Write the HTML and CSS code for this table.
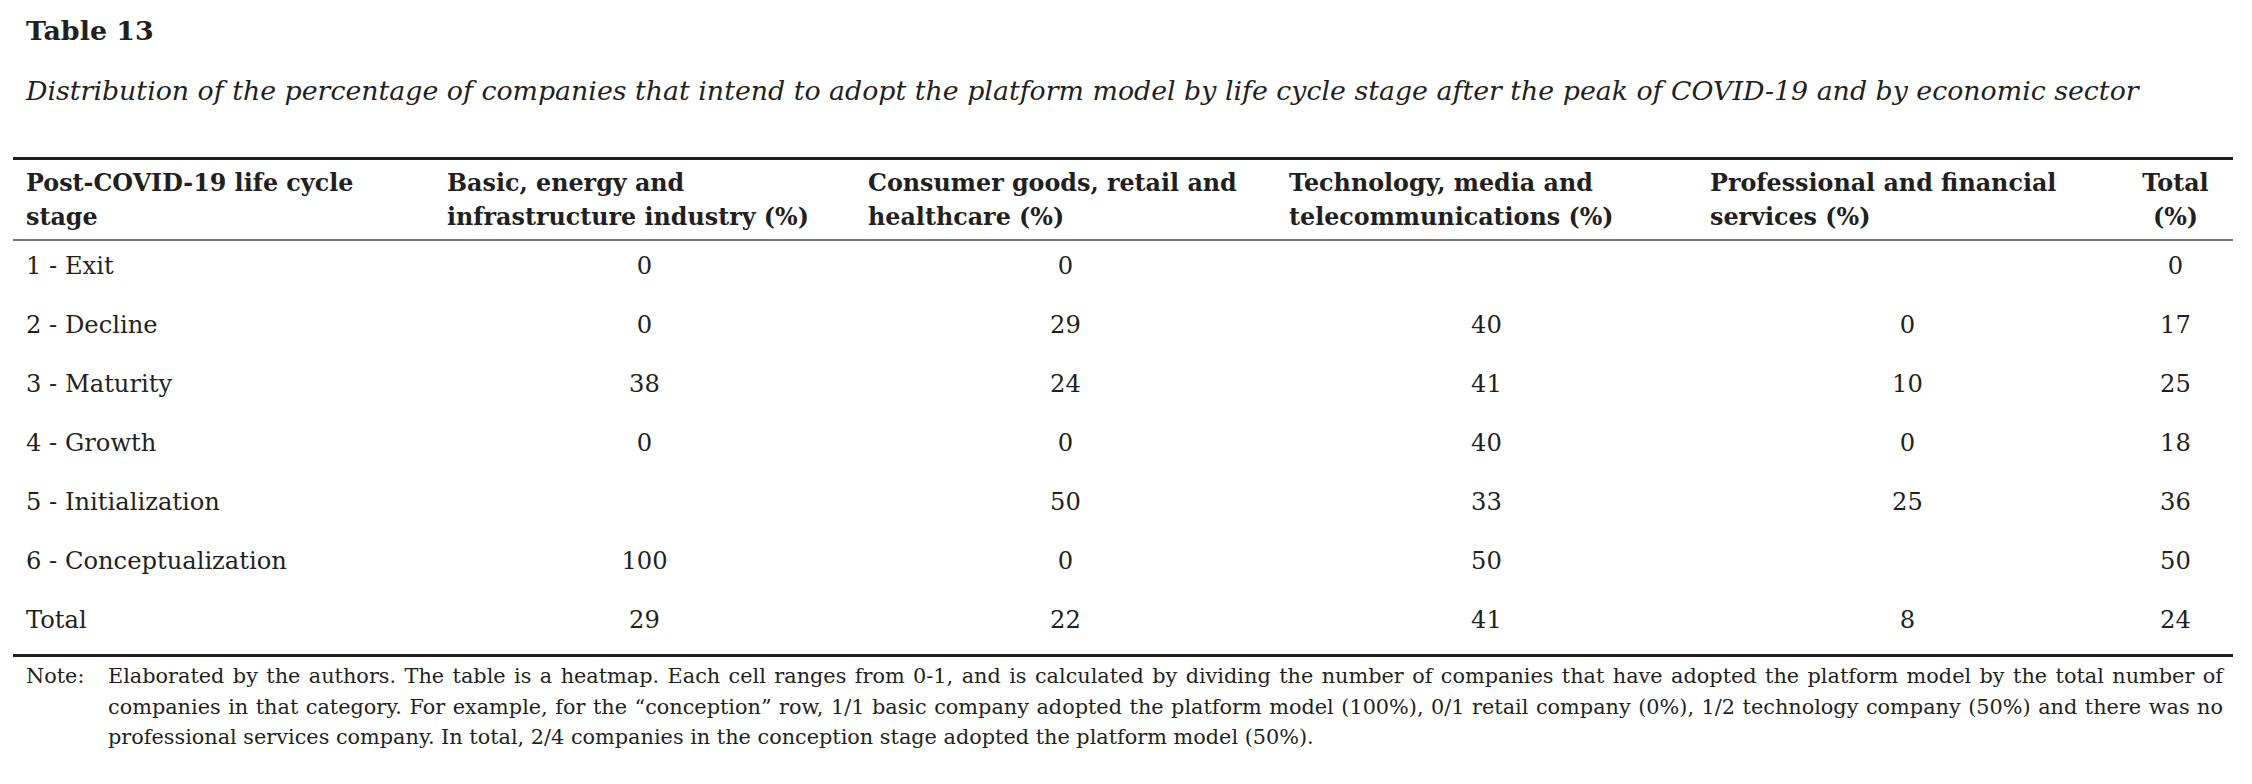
FILE: index.html
```html
<!DOCTYPE html>
<html lang="en">
<head>
<meta charset="utf-8">
<title>Table 13</title>
<link rel="stylesheet" href="styles.css">
</head>
<body>
<div class="page">
  <h1 class="title">Table 13</h1>
  <p class="subtitle">Distribution of the percentage of companies that intend to adopt the platform model by life cycle stage after the peak of COVID-19 and by economic sector</p>
  <table class="data">
    <colgroup>
      <col class="c-wide"><col class="c-wide"><col class="c-wide"><col class="c-wide"><col class="c-wide"><col class="c-narrow">
    </colgroup>
    <thead>
      <tr>
        <th>Post-COVID-19 life cycle<br>stage</th>
        <th>Basic, energy and<br>infrastructure industry (%)</th>
        <th>Consumer goods, retail and<br>healthcare (%)</th>
        <th>Technology, media and<br>telecommunications (%)</th>
        <th>Professional and financial<br>services (%)</th>
        <th class="center">Total<br>(%)</th>
      </tr>
    </thead>
    <tbody>
      <tr><td>1 - Exit</td><td>0</td><td>0</td><td></td><td></td><td>0</td></tr>
      <tr><td>2 - Decline</td><td>0</td><td>29</td><td>40</td><td>0</td><td>17</td></tr>
      <tr><td>3 - Maturity</td><td>38</td><td>24</td><td>41</td><td>10</td><td>25</td></tr>
      <tr><td>4 - Growth</td><td>0</td><td>0</td><td>40</td><td>0</td><td>18</td></tr>
      <tr><td>5 - Initialization</td><td></td><td>50</td><td>33</td><td>25</td><td>36</td></tr>
      <tr><td>6 - Conceptualization</td><td>100</td><td>0</td><td>50</td><td></td><td>50</td></tr>
      <tr><td>Total</td><td>29</td><td>22</td><td>41</td><td>8</td><td>24</td></tr>
    </tbody>
  </table>
  <div class="note">
    <span class="note-label">Note:</span>
    <p class="note-text"><span class="note-line">Elaborated by the authors. The table is a heatmap. Each cell ranges from 0-1, and is calculated by dividing the number of companies that have adopted the platform model by the total number of</span> <span class="note-line">companies in that category. For example, for the “conception” row, 1/1 basic company adopted the platform model (100%), 0/1 retail company (0%), 1/2 technology company (50%) and there was no</span> <span class="note-line last">professional services company. In total, 2/4 companies in the conception stage adopted the platform model (50%).</span></p>
  </div>
</div>
</body>
</html>
```
FILE: styles.css
```css
html, body {
  margin: 0;
  padding: 0;
  background: #ffffff;
}
body {
  font-family: "DejaVu Serif", "Liberation Serif", serif;
  color: #231f20;
}
.page {
  padding: 0 19px 0 13px;
}
.title {
  margin: 0;
  padding: 12px 0 0 13px;
  font-size: 26.9px;
  line-height: 38px;
  font-weight: bold;
}
.subtitle {
  margin: 0;
  padding: 21px 0 0 13px;
  font-size: 26.8px;
  line-height: 40px;
  font-style: italic;
  white-space: nowrap;
}
.data {
  margin-top: 46px;
  width: 2220px;
  border-collapse: collapse;
  table-layout: fixed;
  border-top: 3px solid #231f20;
  border-bottom: 3px solid #231f20;
}
.c-wide { width: 421px; }
.c-narrow { width: 115px; }
.data th {
  font-size: 23.8px;
  line-height: 34px;
  font-weight: bold;
  text-align: left;
  vertical-align: top;
  padding: 6px 13px 5px 13px;
  border-bottom: 2px solid #7a7a7a;
  white-space: nowrap;
}
.data th.center {
  text-align: center;
  padding: 6px 0 5px 0;
}
.data td {
  font-size: 24.2px;
  line-height: 30px;
  padding: 10px 13px 19px 13px;
  text-align: center;
  vertical-align: top;
}
.data td:first-child {
  text-align: left;
}
.data td:last-child {
  padding-left: 0;
  padding-right: 0;
}
.note {
  display: grid;
  grid-template-columns: 82px 1fr;
  padding: 4px 10px 0 13px;
  font-size: 20.8px;
  line-height: 30.5px;
}
.note-label {
  display: block;
}
.note-text {
  margin: 0;
}
.note-line {
  display: block;
  white-space: nowrap;
  text-align: justify;
  text-align-last: justify;
}
.note-line.last {
  text-align: left;
  text-align-last: left;
}
```
